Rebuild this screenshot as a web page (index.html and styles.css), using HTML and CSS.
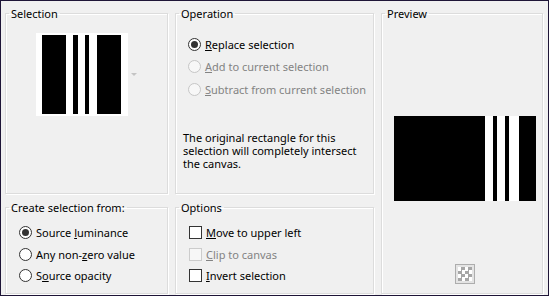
FILE: index.html
```html
<!DOCTYPE html>
<html lang="en">
<head>
    <meta charset="UTF-8">
    <title>Selection</title>
    <link rel="stylesheet" href="styles.css">
</head>
<body>
    <div class="window">
        <fieldset class="group selection">
            <legend>Selection</legend>
            <div class="thumb-row">
                <svg class="thumb" width="92" height="83" viewBox="0 0 92 83">
                    <rect width="92" height="83" fill="#fff"/>
                    <rect x="6" y="2" width="24" height="79" fill="#000"/>
                    <rect x="37" y="2" width="5" height="79" fill="#000"/>
                    <rect x="49" y="2" width="4" height="79" fill="#000"/>
                    <rect x="61" y="2" width="24" height="79" fill="#000"/>
                </svg>
                <span class="drop-arrow"></span>
            </div>
        </fieldset>

        <fieldset class="group operation">
            <legend>Operation</legend>
            <div class="choices">
                <label class="choice"><span class="radio checked"></span><span><u>R</u>eplace selection</span></label>
                <label class="choice disabled"><span class="radio"></span><span><u>A</u>dd to current selection</span></label>
                <label class="choice disabled"><span class="radio"></span><span><u>S</u>ubtract from current selection</span></label>
            </div>
            <p class="note">The original rectangle for this selection will completely intersect the canvas.</p>
        </fieldset>

        <fieldset class="group preview">
            <legend>Preview</legend>
            <div class="preview-body">
                <svg class="preview-img" width="142" height="85" viewBox="0 0 142 85">
                    <rect width="142" height="85" fill="#000"/>
                    <rect x="91" y="0" width="8" height="85" fill="#fff"/>
                    <rect x="103" y="0" width="8" height="85" fill="#fff"/>
                    <rect x="115" y="0" width="10" height="85" fill="#fff"/>
                </svg>
                <span class="checker-btn"><span class="checker"></span></span>
            </div>
        </fieldset>

        <fieldset class="group create">
            <legend>Create selection from:</legend>
            <div class="choices tight">
                <label class="choice"><span class="radio checked"></span><span>Source <u>l</u>uminance</span></label>
                <label class="choice"><span class="radio"></span><span>Any non-<u>z</u>ero value</span></label>
                <label class="choice"><span class="radio"></span><span>S<u>o</u>urce opacity</span></label>
            </div>
        </fieldset>

        <fieldset class="group options">
            <legend>Options</legend>
            <div class="choices tight">
                <label class="choice"><span class="check"></span><span><u>M</u>ove to upper left</span></label>
                <label class="choice disabled"><span class="check"></span><span><u>C</u>lip to canvas</span></label>
                <label class="choice"><span class="check"></span><span><u>I</u>nvert selection</span></label>
            </div>
        </fieldset>
    </div>
</body>
</html>
```

FILE: styles.css
```css
body {
    margin: 0;
    font-family: 'Noto Sans', sans-serif;
    font-size: 11px;
    color: #000;
}
.window {
    width: 549px;
    height: 296px;
    box-sizing: border-box;
    border: 1px solid #1e1537;
    background: #f0f0f0;
    padding: 5px 0 0 4px;
    display: grid;
    grid-template-columns: 163px 199px 162px;
    grid-template-rows: 188px 94px;
    column-gap: 7px;
    row-gap: 6px;
}
.group {
    margin: 0;
    padding: 0;
    min-width: 0;
    border: 1px solid #dcdcdc;
    box-shadow: inset 1px 1px 0 #fff, 1px 1px 0 #fff;
}
.group legend {
    margin-left: 3px;
    padding: 0 2px;
    line-height: 15px;
    height: 15px;
}
.selection { grid-column: 1; grid-row: 1; }
.operation { grid-column: 2; grid-row: 1; }
.preview { grid-column: 3; grid-row: 1 / 3; }
.create { grid-column: 1; grid-row: 2; }
.options { grid-column: 2; grid-row: 2; }

.thumb-row {
    display: flex;
    align-items: center;
    padding: 12px 0 0 30px;
}
.thumb {
    display: block;
}
.drop-arrow {
    width: 0;
    height: 0;
    margin-left: 3px;
    border-left: 3px solid transparent;
    border-right: 3px solid transparent;
    border-top: 3px solid #c4c4c4;
}

.choices {
    display: flex;
    flex-direction: column;
    padding: 12px 0 0 12px;
}
.choices.tight {
    padding: 7px 0 0 13px;
}
.choice {
    display: flex;
    align-items: center;
    gap: 4px;
    height: 22.5px;
    white-space: nowrap;
}
.choices.tight .choice {
    height: 21.5px;
}
.choice.disabled {
    color: #838383;
}
.radio {
    width: 13px;
    height: 13px;
    box-sizing: border-box;
    border: 1px solid #333;
    border-radius: 50%;
    background: #fff;
    display: flex;
    align-items: center;
    justify-content: center;
    flex-shrink: 0;
}
.radio.checked::after {
    content: "";
    width: 7px;
    height: 7px;
    border-radius: 50%;
    background: #333;
}
.disabled .radio {
    border-color: #c6c6c6;
    background: #f7f7f7;
}
.check {
    width: 13px;
    height: 13px;
    box-sizing: border-box;
    border: 1px solid #333;
    background: #fff;
    flex-shrink: 0;
}
.disabled .check {
    border-color: #cccccc;
    background: #f7f7f7;
}
.note {
    margin: 30px 10px 0 7px;
    line-height: 13px;
}

.preview-body {
    display: flex;
    flex-direction: column;
    align-items: center;
    padding: 0 6px 0 12px;
}
.preview-img {
    display: block;
    margin-top: 95px;
}
.checker-btn {
    margin-top: 63px;
    width: 20px;
    height: 20px;
    box-sizing: border-box;
    border: 1px solid #adadad;
    background: #e4e4e4;
    display: flex;
    align-items: center;
    justify-content: center;
}
.checker {
    width: 14px;
    height: 14px;
    background: repeating-conic-gradient(#a6a6a6 0 25%, #fff 0 50%) 0 0 / 7px 7px;
}
```
